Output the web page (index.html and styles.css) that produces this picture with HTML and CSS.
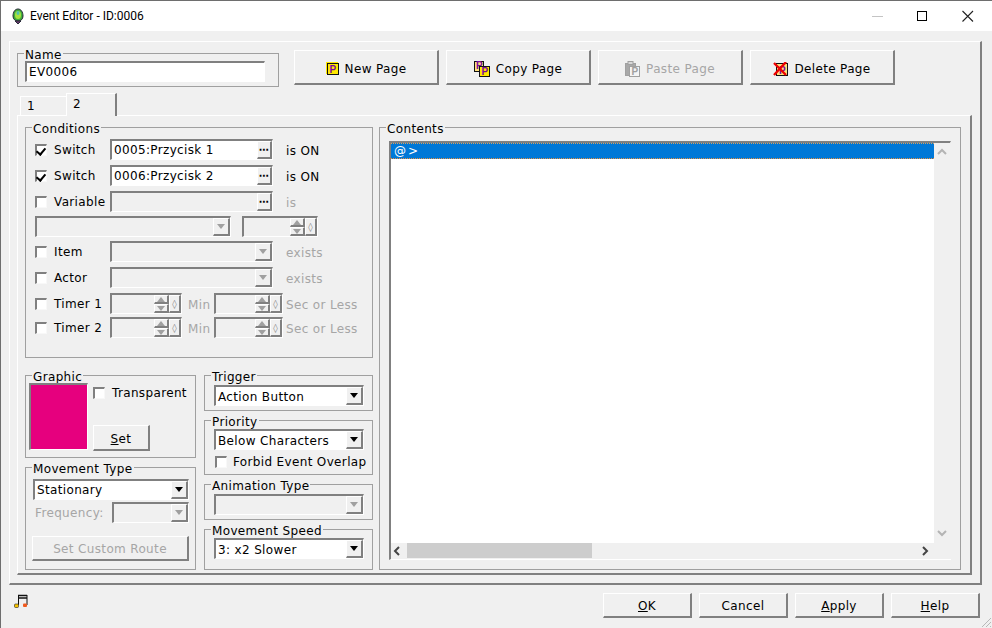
FILE: index.html
```html
<!DOCTYPE html>
<html lang="en">

<head>
    <meta charset="UTF-8">
    <title>Event Editor - ID:0006</title>
    <link rel="stylesheet" href="styles.css">
</head>

<body>
    <div class="window">
        <!-- Title bar -->
        <div class="titlebar">
            <svg class="app-icon" width="12" height="17" viewBox="0 0 12 17">
                <path d="M6 1 C9 1 11 4 11 8 C11 11 9 13 6 13 C3 13 1 11 1 8 C1 4 3 1 6 1Z" fill="#3fae3c" stroke="#2a2a3a" stroke-width="1"/>
                <ellipse cx="6" cy="7" rx="3" ry="4" fill="#a6e23f"/>
                <ellipse cx="6" cy="5" rx="1.5" ry="2" fill="#4fc0b0"/>
                <path d="M3 13 L6 16 L9 13Z" fill="#6a3b6e" stroke="#2a2a3a" stroke-width="1"/>
            </svg>
            <span class="title-text">Event Editor - ID:0006</span>
            <div class="title-buttons">
                <svg width="45" height="30" viewBox="0 0 45 30"><path d="M17 15.5H28" stroke="#c4c4c4"/></svg>
                <svg width="45" height="30" viewBox="0 0 45 30"><rect x="17.5" y="10.5" width="9" height="9" fill="none" stroke="#000"/></svg>
                <svg width="45" height="30" viewBox="0 0 45 30"><path d="M17.5 10L28 20.5M28 10L17.5 20.5" stroke="#222" stroke-width="1.1"/></svg>
            </div>
        </div>

        <div class="frame">
            <!-- Name and page buttons -->
            <div class="top-row">
                <fieldset class="group name-group">
                    <legend>Name</legend>
                    <div class="field name-field"><span class="value">EV0006</span></div>
                </fieldset>
                <div class="page-buttons">
                    <button class="button page-button">
                        <svg width="13" height="13" viewBox="0 0 13 13">
                            <rect width="12" height="12" fill="#ffe800"/>
                            <rect x="1.5" y="1.5" width="11" height="11" fill="#ffe800" stroke="#111"/>
                            <text x="3.5" y="11" class="icon-letter">P</text>
                        </svg>
                        New Page
                    </button>
                    <button class="button page-button">
                        <svg width="16" height="16" viewBox="0 0 16 16">
                            <rect x="0.5" y="0.5" width="9" height="10" fill="#ffe07a" stroke="#111"/>
                            <text x="2" y="8" class="icon-letter">P</text>
                            <rect x="5.5" y="5.5" width="10" height="10" fill="#ffe800" stroke="#111"/>
                            <text x="7.5" y="14" class="icon-letter">P</text>
                        </svg>
                        Copy Page
                    </button>
                    <button class="button page-button" disabled>
                        <svg width="15" height="16" viewBox="0 0 15 16">
                            <rect x="0.5" y="2.5" width="10" height="12" fill="#a8a8a8" stroke="#a0a0a0"/>
                            <rect x="3" y="0.5" width="5" height="3" fill="#d8d8d8" stroke="#a0a0a0"/>
                            <rect x="4.5" y="5.5" width="10" height="10" fill="#f4f4f4" stroke="#a0a0a0"/>
                            <text x="6.5" y="14" class="icon-letter icon-letter-off">P</text>
                        </svg>
                        Paste Page
                    </button>
                    <button class="button page-button">
                        <svg width="15" height="14" viewBox="0 0 15 14">
                            <rect x="3.5" y="1.5" width="11" height="12" fill="#ffe07a" stroke="#111"/>
                            <text x="6" y="12" class="icon-letter">P</text>
                            <path d="M1 1L13 13M13 0L1 13" stroke="#ee0000" stroke-width="2.4"/>
                        </svg>
                        Delete Page
                    </button>
                </div>
            </div>

            <!-- Tabs -->
            <div class="tabs">
                <div class="tab">1</div>
                <div class="tab tab-active">2</div>
            </div>

            <div class="tab-panel">
                <div class="left-col">
                    <fieldset class="group conditions">
                        <legend>Conditions</legend>
                        <div class="cond-rows">
                            <div class="cond-row">
                                <label class="check-label"><span class="check checked"></span>Switch</label>
                                <div class="field cond-field"><span class="value">0005:Przycisk 1</span><span class="button more">&#8943;</span></div>
                                <span class="after">is ON</span>
                            </div>
                            <div class="cond-row">
                                <label class="check-label"><span class="check checked"></span>Switch</label>
                                <div class="field cond-field"><span class="value">0006:Przycisk 2</span><span class="button more">&#8943;</span></div>
                                <span class="after">is ON</span>
                            </div>
                            <div class="cond-row">
                                <label class="check-label"><span class="check"></span>Variable</label>
                                <div class="field cond-field off"><span class="value"></span><span class="button more">&#8943;</span></div>
                                <span class="after muted">is</span>
                            </div>
                            <div class="cond-row">
                                <div class="field var-combo off"><span class="value"></span><span class="button drop"></span></div>
                                <div class="field var-spin off"><span class="value"></span><span class="spin"><i class="button up"></i><i class="button down"></i></span><span class="button dial">&#9674;</span></div>
                            </div>
                            <div class="cond-row">
                                <label class="check-label"><span class="check"></span>Item</label>
                                <div class="field cond-field off"><span class="value"></span><span class="button drop"></span></div>
                                <span class="after muted">exists</span>
                            </div>
                            <div class="cond-row">
                                <label class="check-label"><span class="check"></span>Actor</label>
                                <div class="field cond-field off"><span class="value"></span><span class="button drop"></span></div>
                                <span class="after muted">exists</span>
                            </div>
                            <div class="cond-row">
                                <label class="check-label"><span class="check"></span>Timer 1</label>
                                <div class="field min-spin off"><span class="value"></span><span class="spin"><i class="button up"></i><i class="button down"></i></span><span class="button dial">&#9674;</span></div>
                                <span class="unit muted">Min</span>
                                <div class="field sec-spin off"><span class="value"></span><span class="spin"><i class="button up"></i><i class="button down"></i></span><span class="button dial">&#9674;</span></div>
                                <span class="sec muted">Sec or Less</span>
                            </div>
                            <div class="cond-row">
                                <label class="check-label"><span class="check"></span>Timer 2</label>
                                <div class="field min-spin off"><span class="value"></span><span class="spin"><i class="button up"></i><i class="button down"></i></span><span class="button dial">&#9674;</span></div>
                                <span class="unit muted">Min</span>
                                <div class="field sec-spin off"><span class="value"></span><span class="spin"><i class="button up"></i><i class="button down"></i></span><span class="button dial">&#9674;</span></div>
                                <span class="sec muted">Sec or Less</span>
                            </div>
                        </div>
                    </fieldset>

                    <div class="lower">
                        <div class="lower-left">
                            <fieldset class="group graphic">
                                <legend>Graphic</legend>
                                <div class="graphic-body">
                                    <div class="swatch"></div>
                                    <div class="graphic-side">
                                        <label class="check-label"><span class="check"></span>Transparent</label>
                                        <button class="button set-button"><span><u>S</u>et</span></button>
                                    </div>
                                </div>
                            </fieldset>
                            <fieldset class="group move-type">
                                <legend>Movement Type</legend>
                                <div class="field wide-select"><span class="value">Stationary</span><span class="button drop on"></span></div>
                                <div class="freq-row">
                                    <span class="muted">Frequency:</span>
                                    <div class="field freq-select off"><span class="value"></span><span class="button drop"></span></div>
                                </div>
                                <button class="button route-button" disabled>Set Custom Route</button>
                            </fieldset>
                        </div>
                        <div class="lower-right">
                            <fieldset class="group trigger">
                                <legend>Trigger</legend>
                                <div class="field side-select"><span class="value">Action Button</span><span class="button drop on"></span></div>
                            </fieldset>
                            <fieldset class="group priority">
                                <legend>Priority</legend>
                                <div class="field side-select"><span class="value">Below Characters</span><span class="button drop on"></span></div>
                                <label class="check-label overlap"><span class="check"></span>Forbid Event Overlap</label>
                            </fieldset>
                            <fieldset class="group animation">
                                <legend>Animation Type</legend>
                                <div class="field side-select off"><span class="value"></span><span class="button drop"></span></div>
                            </fieldset>
                            <fieldset class="group speed">
                                <legend>Movement Speed</legend>
                                <div class="field side-select"><span class="value">3: x2 Slower</span><span class="button drop on"></span></div>
                            </fieldset>
                        </div>
                    </div>
                </div>

                <!-- Event commands -->
                <fieldset class="group contents">
                    <legend>Contents</legend>
                    <div class="field event-list">
                        <div class="list-area">
                            <div class="list-row">@&gt;</div>
                        </div>
                        <div class="vscroll">
                            <svg width="16" height="12" viewBox="0 0 16 12"><path d="M4 9L8 5L12 9" fill="none" stroke="#b4b4b4" stroke-width="2"/></svg>
                            <svg width="16" height="12" viewBox="0 0 16 12"><path d="M4 3L8 7L12 3" fill="none" stroke="#b4b4b4" stroke-width="2"/></svg>
                        </div>
                        <div class="hscroll">
                            <svg width="16" height="15" viewBox="0 0 16 15"><path d="M8 4L4 8L8 12" fill="none" stroke="#444" stroke-width="2"/></svg>
                            <div class="hscroll-track"><div class="hscroll-thumb"></div></div>
                            <svg width="18" height="15" viewBox="0 0 18 15"><path d="M7 4L11 8L7 12" fill="none" stroke="#444" stroke-width="2"/></svg>
                        </div>
                        <div class="scroll-corner"></div>
                    </div>
                </fieldset>
            </div>
        </div>

        <!-- Dialog buttons -->
        <div class="footer">
            <svg class="note-icon" width="14" height="14" viewBox="0 0 14 14">
                <path d="M4 1.5H13M4 4H13" stroke="#111" stroke-width="1.4"/>
                <path d="M4.5 1V11M13 1V11" stroke="#111"/>
                <rect x="0.5" y="10" width="4" height="3.5" rx="1" fill="#f8c400" stroke="#222" stroke-width="0.6"/>
                <rect x="9" y="9.5" width="4" height="3.5" rx="1" fill="#f05a1e"/>
            </svg>
            <div class="dialog-buttons">
                <button class="button dialog-button"><span><u>O</u>K</span></button>
                <button class="button dialog-button">Cancel</button>
                <button class="button dialog-button"><span><u>A</u>pply</span></button>
                <button class="button dialog-button"><span><u>H</u>elp</span></button>
            </div>
        </div>

        <svg class="grip" width="12" height="12" viewBox="0 0 12 12">
            <path d="M11 2L2 11M11 6L6 11M11 10L10 11" stroke="#b8b8b8"/>
        </svg>
    </div>
</body>

</html>
```

FILE: styles.css
```css
* {
    box-sizing: border-box;
}

body {
    margin: 0;
    padding: 0;
    background-color: #f0f0f0;
    font-family: "DejaVu Sans", sans-serif;
    font-size: 12px;
    letter-spacing: 0.35px;
    color: #000000;
}

.window {
    position: relative;
    width: 992px;
    height: 628px;
    overflow: hidden;
    background-color: #f0f0f0;
    border-top: 1px solid #6e6e6e;
    border-left: 1px solid #6e6e6e;
}

/* Title bar */
.titlebar {
    display: flex;
    align-items: center;
    height: 30px;
    padding-left: 11px;
    background: #ffffff;
}

.title-text {
    margin-left: 6px;
    font-family: Roboto, sans-serif;
    font-size: 12px;
    letter-spacing: 0;
}

.title-buttons {
    display: flex;
    margin-left: auto;
    margin-right: 2px;
}

/* Bevels */
.frame {
    width: 973px;
    height: 544px;
    margin: 10px 0 0 8px;
    padding: 4px 0 0 7px;
    border-style: solid;
    border-width: 1px 2px 2px 1px;
    border-color: #ffffff #808080 #808080 #ffffff;
}

.button {
    display: inline-flex;
    align-items: center;
    justify-content: center;
    padding: 0;
    background-color: #f0f0f0;
    font: inherit;
    letter-spacing: inherit;
    color: #000000;
    border-style: solid;
    border-width: 1px 2px 2px 1px;
    border-color: #ffffff #808080 #808080 #ffffff;
}

.button:disabled {
    color: #a6a6a6;
}

.field {
    display: flex;
    align-items: stretch;
    height: 21px;
    background: #ffffff;
    border-style: solid;
    border-width: 2px 1px 1px 2px;
    border-color: #808080 #ffffff #ffffff #808080;
}

.field.off {
    background: #f0f0f0;
}

.value {
    flex: 1;
    padding-left: 2px;
    line-height: 19px;
    white-space: nowrap;
}

/* Group boxes: the legend sits 6px in from the border whatever the padding is */
.group {
    --pad: 0px;
    margin: 0;
    padding: 0 0 0 var(--pad);
    min-width: 0;
    border: 1px solid #a0a0a0;
}

.group legend {
    margin-left: calc(6px - var(--pad));
    padding: 0 1px;
    height: 15px;
    line-height: 19px;
}

/* Top row */
.top-row {
    display: flex;
    height: 41px;
}

.name-group {
    --pad: 7px;
    width: 262px;
    height: 41px;
}

.name-field {
    width: 240px;
}

.page-buttons {
    display: flex;
    gap: 7px;
    margin: 4px 0 0 15px;
}

.page-button {
    gap: 6px;
    width: 145px;
    height: 35px;
    padding-top: 3px;
    white-space: nowrap;
}

.icon-letter {
    font-family: "Liberation Sans", sans-serif;
    font-size: 10px;
    font-weight: bold;
    letter-spacing: 0;
    fill: #7a0a9e;
}

.icon-letter-off {
    fill: #a0a0a0;
}

/* Tabs */
.tabs {
    display: flex;
    align-items: flex-end;
    height: 22px;
    margin-top: 6px;
    padding-left: 3px;
}

.tab {
    width: 46px;
    height: 19px;
    padding-left: 6px;
    line-height: 19px;
    border-top: 1px solid #ffffff;
    border-left: 1px solid #ffffff;
}

.tab-active {
    position: relative;
    width: 51px;
    height: 23px;
    margin-bottom: -1px;
    padding-left: 6px;
    line-height: 20px;
    background: #f0f0f0;
    border-right: 2px solid #808080;
}

.tab-panel {
    display: flex;
    gap: 6px;
    width: 955px;
    height: 460px;
    padding: 4px 0 0 7px;
    border-style: solid;
    border-width: 1px 2px 2px 1px;
    border-color: #ffffff #808080 #808080 #ffffff;
}

.left-col {
    display: flex;
    flex-direction: column;
    gap: 10px;
    width: 348px;
}

/* Conditions */
.conditions {
    --pad: 9px;
    height: 238px;
    padding-top: 4px;
}

.cond-rows {
    display: grid;
    grid-template-rows: 26px 26px 25px 25px 26px 26px 24px 21px;
}

.cond-row {
    display: flex;
    align-items: flex-start;
}

.check-label {
    display: flex;
    align-items: center;
    gap: 7px;
    white-space: nowrap;
}

.cond-row .check-label {
    width: 75px;
    height: 22px;
}

.check {
    flex: none;
    width: 12px;
    height: 12px;
    background: #ffffff;
    border-style: solid;
    border-width: 2px 1px 1px 2px;
    border-color: #808080 #f8f8f8 #f8f8f8 #808080;
}

.checked {
    position: relative;
}

.checked::after {
    content: "";
    position: absolute;
    left: 1px;
    top: 0;
    width: 4px;
    height: 7px;
    border-right: 2px solid #000000;
    border-bottom: 2px solid #000000;
    transform: rotate(40deg);
}

.cond-field {
    width: 163px;
}

.after,
.sec {
    margin-left: 13px;
    line-height: 24px;
}

.sec {
    margin-left: 3px;
}

.muted {
    color: #a6a6a6;
}

.more {
    flex: none;
    width: 15px;
    font-size: 10px;
    font-weight: bold;
    line-height: 1;
}

.drop {
    flex: none;
    width: 17px;
}

.drop::after {
    content: "";
    border-left: 4px solid transparent;
    border-right: 4px solid transparent;
    border-top: 5px solid #a0a0a0;
}

.drop.on::after {
    border-top-color: #000000;
}

.spin {
    display: flex;
    flex: none;
    flex-direction: column;
    width: 15px;
}

.spin i {
    flex: 1;
    min-height: 0;
}

.up::after,
.down::after {
    content: "";
    border-left: 4px solid transparent;
    border-right: 4px solid transparent;
}

.up::after {
    border-bottom: 5px solid #a0a0a0;
}

.down::after {
    border-top: 5px solid #a0a0a0;
}

.dial {
    flex: none;
    width: 12px;
    font-size: 9px;
    letter-spacing: 0;
    color: #808080;
}

.var-combo {
    width: 196px;
}

.var-spin {
    width: 76px;
    margin-left: 11px;
}

.min-spin {
    width: 72px;
}

.unit {
    width: 26px;
    margin-left: 6px;
    line-height: 24px;
}

.sec-spin {
    width: 69px;
}

/* Lower groups */
.lower {
    display: flex;
    gap: 8px;
}

.lower-left,
.lower-right {
    display: flex;
    flex-direction: column;
    gap: 2px;
}

.lower-left {
    width: 171px;
}

.lower-right {
    width: 169px;
}

.graphic {
    --pad: 3px;
    height: 90px;
}

.graphic-body {
    display: flex;
    gap: 5px;
}

.swatch {
    width: 59px;
    height: 67px;
    background: #e6007e;
    border-style: solid;
    border-width: 2px 1px 1px 2px;
    border-color: #808080 #ffffff #ffffff #808080;
}

.graphic-side {
    display: flex;
    flex-direction: column;
    align-items: flex-start;
    gap: 25px;
    padding-top: 3px;
}

.set-button {
    width: 57px;
    height: 26px;
    padding-top: 2px;
}

.move-type {
    --pad: 7px;
    height: 110px;
    padding-top: 4px;
}

.wide-select {
    width: 156px;
}

.freq-row {
    display: flex;
    align-items: center;
    justify-content: space-between;
    width: 156px;
    margin-top: 2px;
    padding-left: 2px;
}

.freq-select {
    width: 77px;
}

.route-button {
    width: 157px;
    height: 25px;
    margin: 13px 0 0 -1px;
    padding-top: 2px;
}

.trigger,
.priority,
.animation,
.speed {
    --pad: 9px;
}

.trigger {
    height: 43px;
    padding-top: 2px;
}

.priority {
    height: 62px;
    padding-top: 1px;
}

.animation {
    height: 43px;
    padding-top: 2px;
}

.speed {
    height: 48px;
    padding-top: 1px;
}

.side-select {
    width: 150px;
}

.side-select .value {
    line-height: 21px;
}

.overlap {
    gap: 6px;
    height: 21px;
    margin-top: 1px;
    padding-left: 1px;
}

/* Contents list */
.contents {
    --pad: 9px;
    width: 582px;
    height: 450px;
    padding-top: 6px;
    padding-right: 9px;
    padding-bottom: 9px;
}

.event-list {
    display: grid;
    grid-template-columns: 543px 18px;
    grid-template-rows: 1fr 16px;
    height: 419px;
}

.list-area {
    background: #ffffff;
}

.list-row {
    height: 16px;
    padding-left: 3px;
    line-height: 15px;
    letter-spacing: 2px;
    background: #0078d7;
    color: #ffffff;
    border-top: 1px dotted #d8a060;
    border-bottom: 1px dotted #e89040;
}

.vscroll {
    display: flex;
    flex-direction: column;
    justify-content: space-between;
    padding: 2px 0 3px;
    background: #f0f0f0;
}

.hscroll {
    display: flex;
    background: #f0f0f0;
}

.hscroll-track {
    flex: 1;
}

.hscroll-thumb {
    width: 185px;
    height: 15px;
    background: #cdcdcd;
}

.scroll-corner {
    background: #f0f0f0;
}

/* Footer */
.footer {
    display: flex;
    justify-content: space-between;
    margin-top: 8px;
    padding: 0 12px 0 13px;
}

.note-icon {
    margin-top: 1px;
}

.dialog-buttons {
    display: flex;
    gap: 7px;
}

.dialog-button {
    width: 89px;
    height: 25px;
    padding-top: 2px;
}

.grip {
    position: absolute;
    right: 0;
    bottom: 0;
}
```
